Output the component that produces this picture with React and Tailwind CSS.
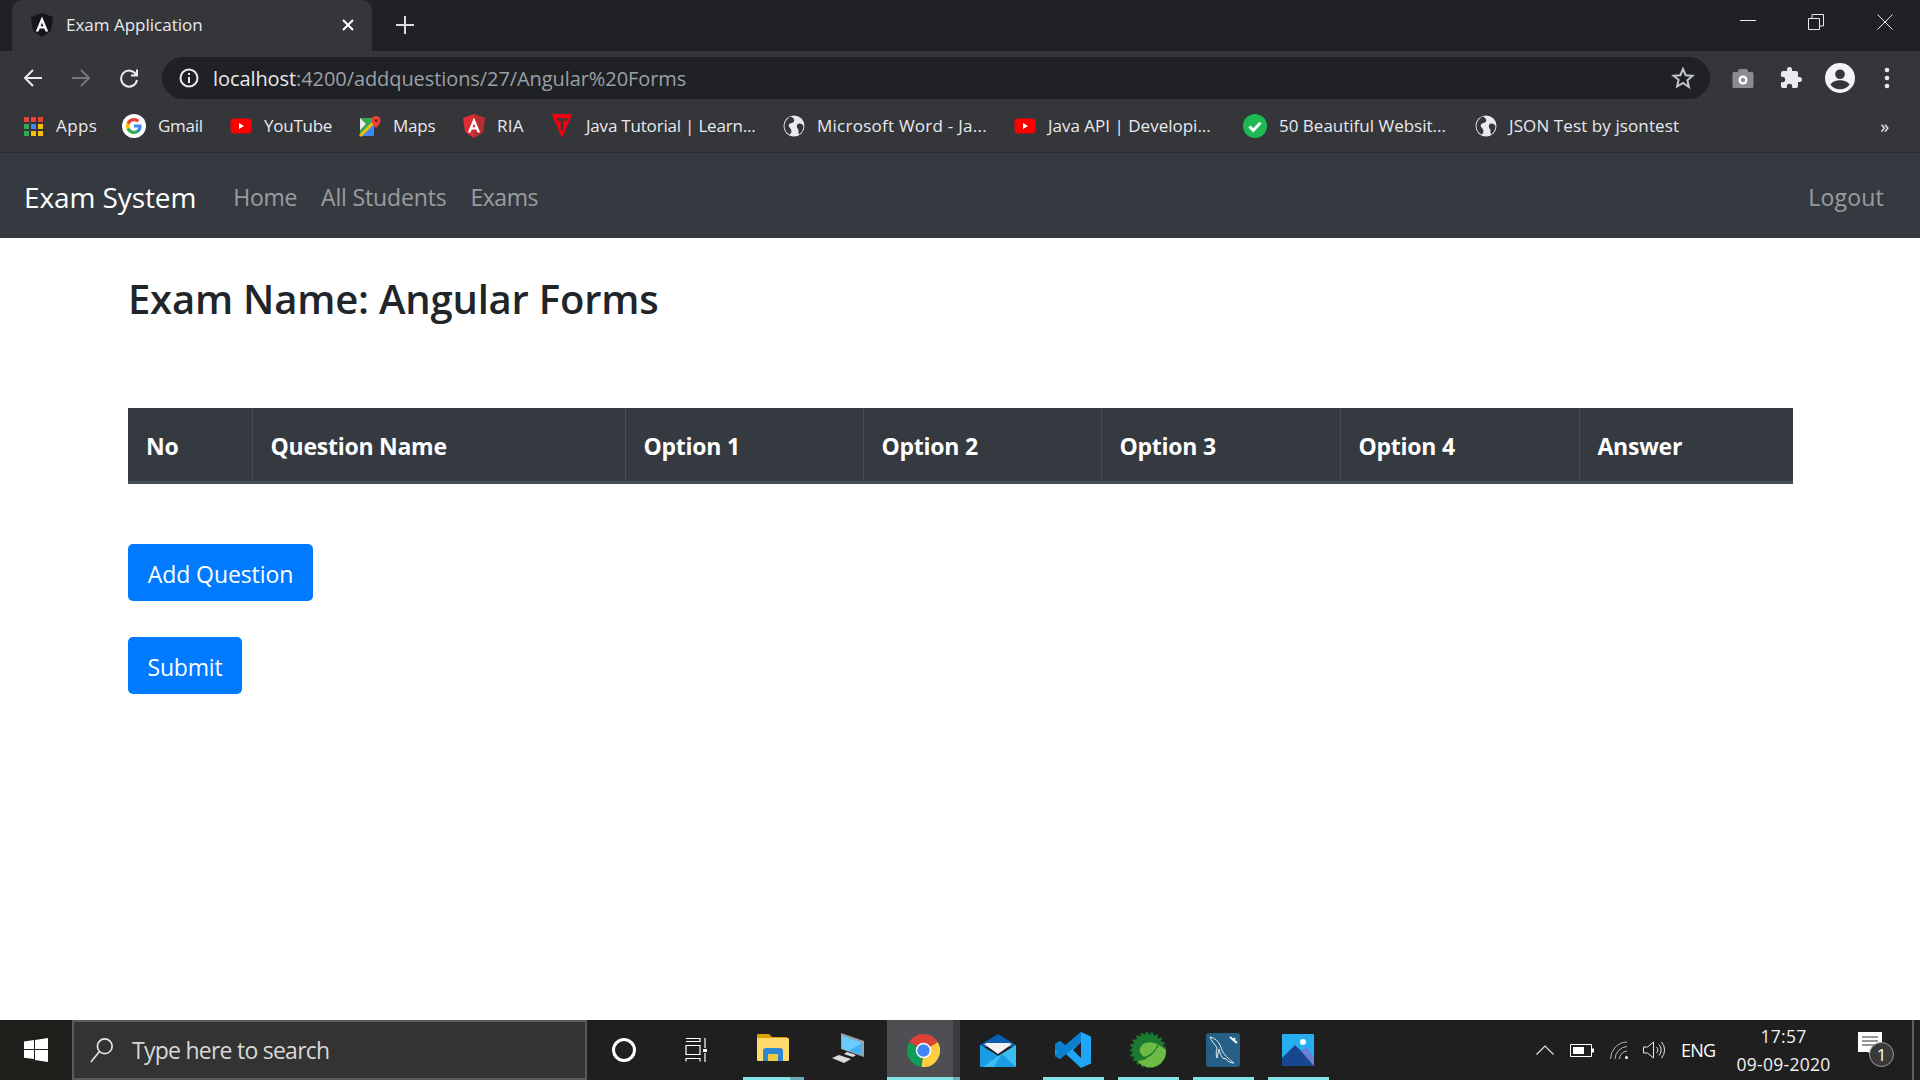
import React from "react";

const Globe = () => (
  <svg viewBox="0 0 22 22" className="w-[22px] h-[22px]">
    <circle cx="11" cy="11" r="10.5" fill="#e8eaed" />
    <path d="M8 1.500c2 1 4 3 3 5-1 2-4 1-5 3-1 2 1 3 2 5 1 2 0 4-1 5-3-1-5.500-4.500-5.500-8.500S4.500 2.500 8 1.500zM15 9c2-1 4.500 0 5.500 2 0 3-1.500 6.500-4.500 8.500-1-2 0-4-1-5.500-1-1-2-4 0-5z" fill="#35363a" />
  </svg>
);

const Youtube = () => (
  <svg viewBox="0 0 22 22" className="w-[22px] h-[22px]">
    <rect x="0.5" y="3.5" width="21" height="15" rx="4" fill="#ff0000" />
    <path d="M9 8l5 3-5 3z" fill="#fff" />
  </svg>
);

const AngularA = () => (
  <path
    fillRule="evenodd"
    d="M11 3.500L4.800 18.500h2.700l1.200-3h4.600l1.200 3h2.700zM9.600 13.200L11 9.500l1.400 3.700z"
    fill="#fff"
  />
);

const bookmarks = [
  { label: "Apps", width: "w-[41px] tracking-[0.4px]", gap: "mr-[25px]", icon: (
    <svg viewBox="0 0 22 22" className="w-[22px] h-[22px]">
      {[["#ea4335", "#ea4335", "#ea4335"], ["#34a853", "#4285f4", "#fbbc04"], ["#34a853", "#fbbc04", "#fbbc04"]].map((row, r) =>
        row.map((c, i) => <rect key={`${r}${i}`} x={2 + i * 7} y={2 + r * 7} width="5" height="5" fill={c} />)
      )}
    </svg>
  ) },
  { label: "Gmail", width: "w-[47px]", gap: "mr-[25px]", icon: (
    <svg viewBox="0 0 24 24" className="w-[24px] h-[24px]">
      <circle cx="12" cy="12" r="12" fill="#fff" />
      <path d="M19.600 12.200c0-.6-.1-1.100-.2-1.600H12v3h4.300c-.2 1-.8 1.800-1.600 2.400v2h2.600c1.500-1.400 2.300-3.400 2.300-5.800z" fill="#4285f4" />
      <path d="M12 20c2.200 0 4-.7 5.300-1.900l-2.600-2c-.7.5-1.600.8-2.700.8-2.100 0-3.900-1.400-4.500-3.300H4.800v2.100C6.100 18.200 8.800 20 12 20z" fill="#34a853" />
      <path d="M7.500 13.600c-.3-1-.3-2.200 0-3.200V8.300H4.800c-1.100 2.200-1.100 5.200 0 7.400z" fill="#fbbc04" />
      <path d="M12 7.200c1.200 0 2.200.4 3.100 1.200l2.300-2.300C16 4.800 14.200 4 12 4 8.800 4 6.100 5.800 4.800 8.300l2.700 2.100C8.100 8.500 9.900 7.200 12 7.200z" fill="#ea4335" />
    </svg>
  ) },
  { label: "YouTube", width: "w-[70px]", gap: "mr-[25px]", icon: <Youtube /> },
  { label: "Maps", width: "w-[44px]", gap: "mr-[26px]", icon: (
    <svg viewBox="0 0 22 22" className="w-[22px] h-[22px]">
      <path d="M1 3h14v18H1z" fill="#34a853" />
      <path d="M1 21L15 7v14z" fill="#4285f4" />
      <path d="M1 21L15 7" stroke="#fbbc04" strokeWidth="3" />
      <path d="M1 3l6 6-6 6z" fill="#e8eaed" />
      <path d="M17 1a4.500 4.500 0 0 1 4.500 4.500C21.500 9 17 13 17 13s-4.500-4-4.500-7.500A4.500 4.500 0 0 1 17 1z" fill="#ea4335" />
      <circle cx="17" cy="5.500" r="1.500" fill="#8a1c14" />
    </svg>
  ) },
  { label: "RIA", width: "w-[27px] tracking-[0.2px]", gap: "mr-[26px]", icon: (
    <svg viewBox="0 0 22 24" className="w-[22px] h-[24px]">
      <path d="M11 0L22 4l-2 14-9 6-9-6L0 4z" fill="#dd2c36" />
      <path d="M11 0L22 4l-2 14-9 6z" fill="#b52e31" />
      <AngularA />
    </svg>
  ) },
  { label: "Java Tutorial | Learn...", width: "w-[170px] tracking-[-0.2px]", gap: "mr-[27px]", icon: (
    <svg viewBox="0 0 24 28" className="w-[24px] h-[24px]">
      <path d="M0 0h24L12 28z" fill="#f5000f" />
      <path d="M6 5h12v3h-4.500v11h-3V8H6z" fill="#35363a" />
    </svg>
  ) },
  { label: "Microsoft Word - Ja...", width: "w-[170px] tracking-[0.25px]", gap: "mr-[27px]", icon: <Globe /> },
  { label: "Java API | Developi...", width: "w-[163px] tracking-[0px]", gap: "mr-[32px]", icon: <Youtube /> },
  { label: "50 Beautiful Websit...", width: "w-[168px] tracking-[0px]", gap: "mr-[28px]", icon: (
    <svg viewBox="0 0 24 24" className="w-[24px] h-[24px]">
      <circle cx="12" cy="12" r="12" fill="#1db954" />
      <path d="M6.500 12.500l3.800 3.800 7.200-7.600" stroke="#fff" strokeWidth="3" fill="none" />
    </svg>
  ) },
  { label: "JSON Test by jsontest", width: "w-[171px] tracking-[0.1px]", gap: "", icon: <Globe /> },
];

const columns = [
  { label: "No", width: "w-[124px]" },
  { label: "Question Name", width: "w-[373px]" },
  { label: "Option 1", width: "w-[238px]" },
  { label: "Option 2", width: "w-[238px]" },
  { label: "Option 3", width: "w-[239px]" },
  { label: "Option 4", width: "w-[239px]" },
  { label: "Answer", width: "" },
];

const TaskIcon = ({ active, bar, stacked, children }) => (
  <div className="relative w-[75px] h-[60px] flex items-center justify-center pr-[3px]">
    {active && <div className="absolute inset-y-0 left-0 w-[66px] bg-[#4f4e52]" />}
    {active && <div className="absolute inset-y-0 left-[66px] w-[7px] bg-[#3a393c]" />}
    <div className="relative">{children}</div>
    {bar && !active && <div className={`absolute bottom-0 left-[6px] h-[3px] bg-[#84e3e8] ${stacked ? "w-[47px]" : "w-[61px]"}`} />}
    {bar && stacked && !active && <div className="absolute bottom-0 left-[53px] w-[14px] h-[3px] bg-[#68aeb2]" />}
    {active && <div className="absolute bottom-0 left-0 w-[66px] h-[3px] bg-[#84e3e8]" />}
    {active && <div className="absolute bottom-0 left-[66px] w-[7px] h-[3px] bg-[#68aeb2]" />}
  </div>
);

const taskApps = [
  { bar: true, stacked: true, icon: (
    <svg viewBox="0 0 32 27" className="w-[32px] h-[27px] mt-[-6px]">
      <path d="M0 1a1 1 0 0 1 1-1h11l3 3h15v5H0z" fill="#dea000" />
      <path d="M0 4h31a1 1 0 0 1 1 1v21a1 1 0 0 1-1 1H1a1 1 0 0 1-1-1z" fill="#ffd96b" />
      <path d="M6 27V17a3 3 0 0 1 3-3h14a3 3 0 0 1 3 3v10h-5v-7H11v7z" fill="#2f88cf" />
      <path d="M11 20h10v7H11z" fill="#f5c842" />
    </svg>
  ) },
  { icon: (
    <svg viewBox="0 0 32 30" className="w-[32px] h-[30px] mt-[-4px]">
      <path d="M9 0l23 8v16L9 16z" fill="#9aa3ab" />
      <path d="M10 3l20 7v12L10 15z" fill="#40b4f5" />
      <path d="M10 3l20 7-14 8-6-3z" fill="#6ccbff" />
      <path d="M15 19l9 3-3 2-9-3zM0 25l7-3 12 4-7 4z" fill="#d9dcde" />
    </svg>
  ) },
  { active: true, bar: true, icon: (
    <svg viewBox="0 0 32 32" className="w-[33px] h-[33px]">
      <path d="M16 16L2.140 8A16 16 0 0 1 29.860 8z" fill="#db4437" />
      <path d="M16 16L29.860 8A16 16 0 0 1 14 31.900z" fill="#ffcd40" />
      <path d="M16 16L14 31.900A16 16 0 0 1 2.140 8z" fill="#0f9d58" />
      <circle cx="16" cy="16" r="7.500" fill="#fff" />
      <circle cx="16" cy="16" r="6" fill="#4285f4" />
    </svg>
  ) },
  { icon: (
    <svg viewBox="0 0 36 33" className="w-[36px] h-[33px]">
      <path d="M18 0l18 11v2H0v-2z" fill="#0a5fb0" />
      <path d="M4 10l3-1h22l3 1-14 10z" fill="#f2f2f2" />
      <path d="M0 11l18 11 18-11v21a1 1 0 0 1-1 1H1a1 1 0 0 1-1-1z" fill="#38bff0" />
      <path d="M0 32V11l18 11-15 11H1a1 1 0 0 1-1-1zM36 33H14l8-13z" fill="#1a9be6" />
    </svg>
  ) },
  { bar: true, icon: (
    <svg viewBox="0 0 36 36" className="w-[36px] h-[36px]">
      <path d="M26 0l10 4.500v27L26 36 11 22l-6 5-5-3V12l5-3 6 5zM26 10l-8 8 8 8z" fill="#1fa6f4" fillRule="evenodd" />
      <path d="M26 0L5 21v-0l-5-3v-6l5-3 6 5z" fill="#0d7fd1" />
      <path d="M26 0v10L5 27l-5-3v-2L22 3z" fill="#0d7fd1" />
    </svg>
  ) },
  { bar: true, icon: (
    <svg viewBox="0 0 36 36" className="w-[36px] h-[36px]">
      <circle cx="18" cy="18" r="16" fill="#1a7a30" />
      <circle cx="18" cy="18" r="16.500" fill="none" stroke="#1a7a30" strokeWidth="3" strokeDasharray="2.500 2.500" />
      <path d="M36 18A16 16 0 0 1 8 30c1-2 6-2 9-3-6-4-10-8-5-14 6-5 14-3 24 5z" fill="#6dbb45" />
      <path d="M7 26c9 2 17-3 21-13-3 8-12 14-21 13z" fill="#1a7a30" stroke="#1a7a30" />
    </svg>
  ) },
  { bar: true, icon: (
    <svg viewBox="0 0 34 34" className="w-[34px] h-[34px]">
      <rect width="34" height="34" rx="3" fill="#255f86" />
      <path d="M4 4c5 1 8 4 10 8 2 5 3 9 8 13 2 2 3 3 6 5-4 0-7-2-9-5l-1 1c-3-2-4-6-5-10l-2 9c-1-3-1-7 0-10C9 11 5 8 4 4z" fill="none" stroke="#e0eaf0" strokeWidth="1" />
      <path d="M24 4l7 6M29 5l-2 3" stroke="#f4f7f9" strokeWidth="2" />
    </svg>
  ) },
  { bar: true, icon: (
    <svg viewBox="0 0 32 32" className="w-[32px] h-[32px]">
      <rect width="32" height="32" rx="1" fill="#27aef0" />
      <path d="M0 24L13 11l19 18v3H0z" fill="#18478f" />
      <path d="M19 17l6-4 7 12v7z" fill="#6a80d8" />
      <circle cx="21" cy="8" r="3" fill="#fff" />
    </svg>
  ) },
];

export default function App() {
  return (
    <div className="w-[1920px] h-[1080px] overflow-hidden flex flex-col bg-white font-['Open_Sans','Noto_Sans',sans-serif]">
      {/* browser chrome */}
      <div className="h-[51px] flex bg-[#202124] pl-[12px]">
        <div className="w-[360px] h-[51px] rounded-t-[11px] bg-[#35363a] flex items-center pl-[18px] pr-[17px] pb-[2px]">
          <svg viewBox="0 0 22 24" className="w-[24px] h-[24px] shrink-0">
            <path d="M11 0L22 4l-2 14-9 6-9-6L0 4z" fill="#14161a" />
            <AngularA />
          </svg>
          <span className="ml-[12px] text-[17px] text-[#e8eaed] flex-1">Exam Application</span>
          <svg viewBox="0 0 14 14" className="w-[14px] h-[14px]">
            <path d="M2 2l10 10M12 2L2 12" stroke="#fff" strokeWidth="2" />
          </svg>
        </div>
        <div className="w-[48px] flex items-center justify-center pl-[18px] pb-[2px]">
          <svg viewBox="0 0 18 18" className="w-[18px] h-[18px]">
            <path d="M9 0v18M0 9h18" stroke="#dadce0" strokeWidth="2" />
          </svg>
        </div>
        <div className="flex-1" />
        <div className="flex items-start pt-[14px] pr-[27px]">
          <svg viewBox="0 0 16 16" className="w-[16px] h-[16px] mr-[52px]"><path d="M0 6.500h16" stroke="#e8eaed" strokeWidth="1" /></svg>
          <svg viewBox="0 0 16 16" className="w-[16px] h-[16px] mr-[53px]"><path d="M0.500 4.500h11v11h-11zM4 4V0.500h11.500V12H12" stroke="#e8eaed" fill="none" /></svg>
          <svg viewBox="0 0 16 16" className="w-[16px] h-[16px]"><path d="M0.500 0.500l15 15M15.500 0.500l-15 15" stroke="#e8eaed" /></svg>
        </div>
      </div>

      <div className="h-[48px] bg-[#35363a] flex items-start">
        <div className="h-[48px] w-[162px] flex items-center shrink-0 pl-[23px] pt-[6px]">
          <svg viewBox="0 0 20 20" className="w-[20px] h-[20px] mr-[28px]"><path d="M19 10H2M10 2l-8 8 8 8" stroke="#e8eaed" strokeWidth="2" fill="none" /></svg>
          <svg viewBox="0 0 20 20" className="w-[20px] h-[20px] mr-[28px]"><path d="M1 10h17M10 2l8 8-8 8" stroke="#77787b" strokeWidth="2" fill="none" /></svg>
          <svg viewBox="0 0 20 20" className="w-[20px] h-[20px]"><path d="M17 6.500A8 8 0 1 0 18 12M18 1.500V7.500h-6" stroke="#e8eaed" strokeWidth="2" fill="none" /></svg>
        </div>
        <div className="mt-[6px] w-[1548px] h-[42px] rounded-full bg-[#202124] flex items-center pl-[17px] pr-[15px]">
          <svg viewBox="0 0 20 20" className="w-[20px] h-[20px] mr-[14px]">
            <circle cx="10" cy="10" r="8.500" stroke="#e8eaed" strokeWidth="2" fill="none" />
            <path d="M10 9v6M10 5v2" stroke="#e8eaed" strokeWidth="2" />
          </svg>
          <span className="text-[20px] tracking-[-0.08px] text-[#e8eaed] pt-[1px]">localhost<span className="text-[#9aa0a6]">:4200/addquestions/27/Angular%20Forms</span></span>
          <svg viewBox="0 0 24 24" className="w-[24px] h-[24px] ml-auto">
            <path d="M12 3l2.700 6.200 6.800.6-5.100 4.500 1.500 6.700L12 17l-5.900 3.500 1.500-6.700L2.500 9.800l6.800-.6z" fill="none" stroke="#c4c7c9" strokeWidth="2" />
          </svg>
        </div>
        <div className="flex-1 flex items-center h-[48px] pt-[6px] pl-[21px]">
          <svg viewBox="0 0 24 24" className="w-[24px] h-[24px] mr-[24px]">
            <path d="M8 3h8l1.500 3H21a1.500 1.500 0 0 1 1.500 1.500v13A1.500 1.500 0 0 1 21 22H3a1.500 1.500 0 0 1-1.500-1.500v-13A1.500 1.500 0 0 1 3 6h3.500z" fill="#8a8b8e" />
            <circle cx="12" cy="14" r="4.500" fill="#fff" />
            <circle cx="12" cy="14" r="2.200" fill="#8a8b8e" />
          </svg>
          <svg viewBox="0 0 24 24" className="w-[24px] h-[24px] mr-[22px]">
            <path d="M20.500 11H19V7a2 2 0 0 0-2-2h-4V3.500a2.500 2.500 0 0 0-5 0V5H4a2 2 0 0 0-2 2v3.800h1.500a2.700 2.700 0 0 1 0 5.400H2V20a2 2 0 0 0 2 2h3.800v-1.500a2.700 2.700 0 0 1 5.400 0V22H17a2 2 0 0 0 2-2v-4h1.500a2.500 2.500 0 0 0 0-5z" fill="#e8eaed" />
          </svg>
          <svg viewBox="0 0 28 28" className="w-[30px] h-[30px] mr-[29px]">
            <circle cx="14" cy="14" r="14" fill="#f1f3f4" />
            <circle cx="14" cy="10.500" r="4.500" fill="#35363a" />
            <path d="M5 20c2-3 6-4 9-4s7 1 9 4c-2 3-5 4.500-9 4.500S7 23 5 20z" fill="#35363a" />
          </svg>
          <svg viewBox="0 0 6 22" className="w-[6px] h-[22px]">
            <circle cx="3" cy="3" r="2.300" fill="#e8eaed" /><circle cx="3" cy="11" r="2.300" fill="#e8eaed" /><circle cx="3" cy="19" r="2.300" fill="#e8eaed" />
          </svg>
        </div>
      </div>

      <div className="h-[54px] bg-[#35363a] flex items-center pl-[22px] pr-[31px] border-b border-[#2c2d30] text-[17px] tracking-[-0.25px] text-[#e8eaed]">
        {bookmarks.map((b) => (
          <div key={b.label} className={`flex items-center gap-[12px] ${b.gap}`}>
            {b.icon}
            <span className={`${b.width} whitespace-nowrap`}>{b.label}</span>
          </div>
        ))}
        <span className="ml-auto text-[18px] leading-none">»</span>
      </div>

      {/* app navbar */}
      <nav className="h-[85px] bg-[#343a40] flex items-center pl-[24px] pr-[36px] pt-[3px]">
        <span className="text-[28px] tracking-[-0.1px] text-white mr-[37px]">Exam System</span>
        <a className="text-[23px] tracking-[-0.3px] text-white/50 mr-[24px]">Home</a>
        <a className="text-[23px] tracking-[-0.15px] text-white/50 mr-[24px]">All Students</a>
        <a className="text-[23px] tracking-[-0.5px] text-white/50">Exams</a>
        <a className="ml-auto text-[23px] tracking-[0.2px] text-white/50">Logout</a>
      </nav>

      {/* page */}
      <main className="flex-1 px-[128px] text-[#212529]">
        <h1 className="mt-[37px] text-[40px] leading-[48px] font-semibold tracking-[-0.2px]">Exam Name: Angular Forms</h1>
        <table className="mt-[85px] w-[1665px] table-fixed border-collapse">
          <thead>
            <tr className="h-[74px] bg-[#343a40] text-white border-b-[3px] border-[#454d55]">
              {columns.map((c) => (
                <th key={c.label} className={`${c.width} border-l first:border-l-0 border-[#454d55] pl-[18px] pt-[3px] text-left text-[23px] font-bold tracking-[-0.25px]`}>
                  {c.label}
                </th>
              ))}
            </tr>
          </thead>
        </table>
        <div className="mt-[60px] flex flex-col items-start gap-[36px]">
          <button className="w-[185px] h-[57px] pt-[5px] rounded-[5px] bg-[#007bff] text-white text-[23px] tracking-[-0.1px]">Add Question</button>
          <button className="w-[114px] h-[57px] pt-[5px] rounded-[5px] bg-[#007bff] text-white text-[23px] tracking-[-0.2px]">Submit</button>
        </div>
      </main>

      {/* windows taskbar */}
      <div className="h-[60px] bg-[#1f1f20] flex items-center text-white">
        <div className="w-[72px] h-[60px] bg-[#1e1e1a] flex items-center justify-center">
          <svg viewBox="0 0 24 24" className="w-[24px] h-[24px]">
            <path d="M0 3.500l10-1.400V11H0zM11 2l13-2v11H11zM0 12h10v9L0 19.800zM11 12h13v12l-13-2z" fill="#fff" />
          </svg>
        </div>
        <div className="w-[515px] h-[60px] bg-[#333333] border-2 border-[#5a5a5a] flex items-center pl-[16px]">
          <svg viewBox="0 0 26 28" className="w-[24px] h-[26px] mr-[18px]">
            <circle cx="16" cy="10" r="8" stroke="#e6e6e6" strokeWidth="1.800" fill="none" />
            <path d="M10 16L1 27" stroke="#e6e6e6" strokeWidth="1.800" />
          </svg>
          <span className="text-[23px] tracking-[-0.75px] pt-[1px] text-[#d8d8d8]">Type here to search</span>
        </div>
        <div className="w-[74px] flex justify-center">
          <div className="w-[24px] h-[24px] rounded-full border-[3px] border-white" />
        </div>
        <div className="w-[70px] flex justify-center">
          <svg viewBox="0 0 22 24" className="w-[22px] h-[24px]">
            <path d="M1 0.500h14v3H1M1 7.500h14v9H1zM1 23.500v-3h14v3M20 0v10M20 15v9" stroke="#fff" strokeWidth="1.200" fill="none" />
            <rect x="18" y="11" width="4" height="3" fill="#fff" />
          </svg>
        </div>
        <div className="flex pl-[6px]">
          {taskApps.map((t, i) => (
            <TaskIcon key={i} active={t.active} bar={t.bar} stacked={t.stacked}>{t.icon}</TaskIcon>
          ))}
        </div>
        <div className="flex-1" />
        <div className="flex items-center pr-[18px]">
          <svg viewBox="0 0 18 10" className="w-[18px] h-[10px] mr-[16px]"><path d="M0.500 9.500L9 1l8.500 8.500" stroke="#e8e8e8" strokeWidth="1.100" fill="none" /></svg>
          <svg viewBox="0 0 24 13" className="w-[24px] h-[13px] mr-[16px]">
            <path d="M0.500 0.500h21v12h-21z" stroke="#fff" fill="none" /><rect x="3" y="3" width="11" height="7" fill="#fff" /><rect x="22" y="4.500" width="2" height="4" fill="#fff" />
          </svg>
          <svg viewBox="0 0 18 18" className="w-[18px] h-[18px] mr-[15px]">
            <path d="M0.500 18A17 17 0 0 1 17 1M5 18A13 13 0 0 1 17 5.500M9.500 18A8 8 0 0 1 17 10" stroke="#c8c8c8" strokeWidth="0.900" fill="none" />
            <circle cx="16.500" cy="16.500" r="1.500" fill="#fff" />
          </svg>
          <svg viewBox="0 0 22 18" className="w-[22px] h-[18px] mr-[16px]">
            <path d="M0.500 6h4l6-5v16l-6-5h-4zM13.500 6a4 4 0 0 1 0 6M16 3.500a8 8 0 0 1 0 11M18.500 1a12 12 0 0 1 0 16" stroke="#e8e8e8" strokeWidth="1" fill="none" />
          </svg>
          <span className="w-[33px] text-[18px] tracking-[-0.8px] mr-[23px] whitespace-nowrap">ENG</span>
          <div className="w-[93px] flex flex-col items-center text-[17.500px] leading-[28px] tracking-[0.25px] text-[#f0f0f0] mr-[28px] whitespace-nowrap">
            <span>17:57</span>
            <span>09-09-2020</span>
          </div>
          <div className="relative w-[36px] h-[36px]">
            <svg viewBox="0 0 24 24" className="w-[24px] h-[24px]">
              <path d="M0 0h24v20H15l-1 4-4-4H0z" fill="#fff" />
              <path d="M4 5h16M4 9h16M4 13h16" stroke="#333" strokeWidth="1.100" />
            </svg>
            <div className="absolute left-[11px] top-[10px] w-[25px] h-[25px] rounded-full bg-[#3a3a3a] border border-[#9a9a9a] flex items-center justify-center text-[17px] leading-none">1</div>
          </div>
        </div>
        <div className="w-[2px] h-[60px] bg-[#5e5e5e]" />
        <div className="w-[6px]" />
      </div>
    </div>
  );
}
